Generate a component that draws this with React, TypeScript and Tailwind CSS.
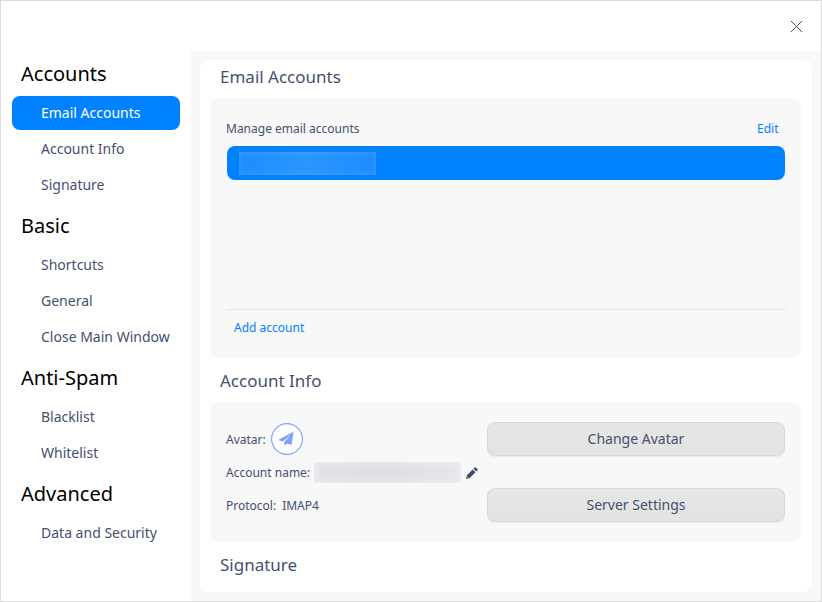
import React from "react";

type Group = { title: string; items: string[] };

const groups: Group[] = [
  { title: "Accounts", items: ["Email Accounts", "Account Info", "Signature"] },
  { title: "Basic", items: ["Shortcuts", "General", "Close Main Window"] },
  { title: "Anti-Spam", items: ["Blacklist", "Whitelist"] },
  { title: "Advanced", items: ["Data and Security"] },
];

function Sidebar() {
  return (
    <nav className="flex w-[190px] shrink-0 flex-col gap-0.5 pt-px pr-[11px] pl-[11px]">
      {groups.map((group) => (
        <div key={group.title} className="flex flex-col gap-0.5">
          <h2 className="flex h-[42px] items-center pt-0.5 pl-[9px] text-[20px] text-black">{group.title}</h2>
          {group.items.map((item) => (
            <a
              key={item}
              className={
                item === "Email Accounts"
                  ? "flex h-[34px] items-center rounded-lg bg-[#0081ff] pl-[29px] text-sm whitespace-nowrap text-white"
                  : "flex h-[34px] items-center rounded-lg pl-[29px] text-sm whitespace-nowrap"
              }
            >
              {item}
            </a>
          ))}
        </div>
      ))}
    </nav>
  );
}

function Button({ label }: { label: string }) {
  return (
    <button className="flex h-[34px] w-[298px] items-center justify-center rounded-lg border border-[#d8d8d8] bg-linear-to-b from-[#e6e6e6] to-[#e3e3e3] text-sm shadow-[0_1px_1px_rgba(0,0,0,0.06)]">
      {label}
    </button>
  );
}

function SectionTitle({ children }: { children: string }) {
  return <h3 className="flex h-11 items-center pt-0.5 pl-5 text-[17px]">{children}</h3>;
}

export default function App() {
  return (
    <div className="flex h-[602px] w-[822px] flex-col overflow-hidden border border-[#dcdcdc] bg-white font-['Noto_Sans',sans-serif] text-[#445070]">
      <header className="flex h-[50px] shrink-0 items-center justify-end pr-[19px]">
        <svg width="11" height="11" viewBox="0 0 11 11" stroke="#414d68" className="mt-px">
          <path d="M0 0L11 11M11 0L0 11" strokeWidth="1" />
        </svg>
      </header>
      <div className="flex min-h-0 flex-1">
        <Sidebar />
        <main className="flex-1 bg-[#f8f8f8] py-[9px] pr-[9px] pl-[9px]">
          <div className="flex h-full flex-col overflow-hidden rounded-lg bg-white">
            <h3 className="flex h-[38px] items-center pb-1 pl-5 text-[17px]">Email Accounts</h3>
            <section className="mr-[11px] ml-2.5 flex h-[260px] shrink-0 flex-col rounded-lg bg-[#f8f8f8] px-4 pt-5 text-xs">
              <div className="flex h-[21px] items-center justify-between pr-[6.5px]">
                <span>Manage email accounts</span>
                <a className="text-[#0081ff]">Edit</a>
              </div>
              <div className="mt-[7px] mr-0 ml-px flex h-[34px] w-[558px] items-center rounded-lg bg-[#0081ff] pl-3">
                <div className="h-[23px] w-[137px] bg-linear-to-r from-[#1c8eff] via-[#2c95ff] to-[#1a8dff] shadow-[inset_0_0_6px_rgba(110,185,255,0.5)]" />
              </div>
              <div className="mt-[129px] -mr-px h-px w-[560px] bg-[#e5e5e5]" />
              <a className="mt-2.5 pl-2 text-[#0081ff]">Add account</a>
            </section>
            <SectionTitle>Account Info</SectionTitle>
            <section className="mr-[11px] ml-2.5 flex h-[140px] shrink-0 justify-between rounded-lg bg-[#f8f8f8] pt-5 pr-4 pl-4 text-xs">
              <div className="flex flex-col">
                <div className="flex h-[34px] items-center">
                  <span className="w-[45px] pt-0.5">Avatar:</span>
                  <svg width="32" height="32" viewBox="0 0 32 32">
                    <circle cx="16" cy="16" r="15.4" fill="#fff" stroke="#7c9fff" strokeWidth="1.1" />
                    <path d="M22.6 8.6L7.3 17L11.9 18.5L20 11.6Z" fill="#7c9fff" />
                    <path d="M22.6 8.6L13.2 19.2L13.7 23.3L15.8 20.4L20.6 21.8Z" fill="#7c9fff" />
                  </svg>
                </div>
                <div className="mt-[6px] flex h-[21px] items-center">
                  <span className="w-[88px] whitespace-nowrap">Account name:</span>
                  <div className="h-[21px] w-[147px] bg-linear-to-r from-[#e2e3e7] via-[#dedfe3] to-[#e6e7ea] shadow-[inset_0_0_8px_rgba(248,248,248,0.7)]" />
                  <svg className="ml-[5px]" width="12" height="12" viewBox="0 0 12 12" fill="#414d68">
                    <path d="M0 12L.9 8.3L6.7 2.5L9.5 5.3L3.7 11.1ZM7.4 1.8L8.7.5Q9.3-.1 9.9.5L11.5 2.1Q12.1 2.7 11.5 3.3L10.2 4.6Z" />
                    <path d="M1.3 9.4L2.6 10.7L1.1 11Z" fill="#aab0bc" />
                  </svg>
                </div>
                <div className="mt-3 flex h-[21px] items-center gap-1.5">
                  <span>Protocol:</span>
                  <span>IMAP4</span>
                </div>
              </div>
              <div className="flex flex-col gap-8">
                <Button label="Change Avatar" />
                <Button label="Server Settings" />
              </div>
            </section>
            <SectionTitle>Signature</SectionTitle>
          </div>
        </main>
      </div>
    </div>
  );
}
